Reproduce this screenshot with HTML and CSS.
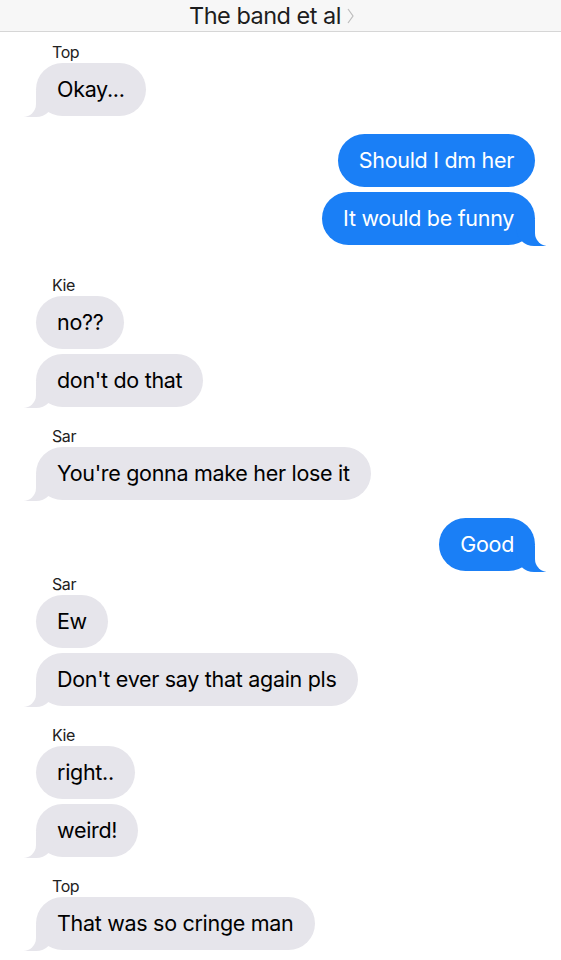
FILE: index.html
```html
<!DOCTYPE html>
<html lang="en">
<head>
  <meta charset="UTF-8">
  <title>The band et al</title>
  <link rel="stylesheet" href="styles.css">
</head>
<body>

<!-- conversation header -->
<header class="topbar">
  <span class="title">The band et al</span>
  <svg class="chevron" width="7" height="16" viewBox="0 0 7 16">
    <polyline points="1,1 6,8 1,15" fill="none" stroke="#bdbdbd" stroke-width="1.2"/>
  </svg>
</header>

<main class="thread">

  <div class="group them first">
    <div class="sender">Top</div>
    <div class="bubble tail">Okay...</div>
  </div>

  <div class="group me">
    <div class="bubble">Should I dm her</div>
    <div class="bubble tail">It would be funny</div>
  </div>

  <div class="group them gap-lg">
    <div class="sender">Kie</div>
    <div class="bubble">no??</div>
    <div class="bubble tail">don't do that</div>
  </div>

  <div class="group them">
    <div class="sender">Sar</div>
    <div class="bubble tail">You're gonna make her lose it</div>
  </div>

  <div class="group me">
    <div class="bubble tail">Good</div>
  </div>

  <div class="group them gap-sm">
    <div class="sender">Sar</div>
    <div class="bubble">Ew</div>
    <div class="bubble tail">Don't ever say that again pls</div>
  </div>

  <div class="group them">
    <div class="sender">Kie</div>
    <div class="bubble">right..</div>
    <div class="bubble tail">weird!</div>
  </div>

  <div class="group them">
    <div class="sender">Top</div>
    <div class="bubble tail">That was so cringe man</div>
  </div>

</main>

</body>
</html>
```

FILE: styles.css
```css
:root {
  --gray: #e6e5eb;
  --blue: #1a7ff6;
  --bg: #fff;
}
* {
  box-sizing: border-box;
  margin: 0;
  padding: 0;
}
body {
  font-family: 'Inter', 'Liberation Sans', sans-serif;
  background: var(--bg);
  color: #000;
}

/* header bar */
.topbar {
  height: 32px;
  background: #f7f7f7;
  border-bottom: 1px solid #d6d6d6;
  display: flex;
  align-items: center;
  justify-content: center;
  gap: 6px;
  padding-right: 18px;
}
.title {
  font-size: 23.5px;
  letter-spacing: -0.5px;
  color: #1d1d1d;
  line-height: 30px;
}
.chevron {
  margin-top: 1px;
}

/* messages */
.thread {
  display: flex;
  flex-direction: column;
  padding-bottom: 10px;
}
.group {
  display: flex;
  flex-direction: column;
  gap: 5px;
  margin-top: 19px;
}
.group.first { margin-top: 10px; }
.group.gap-lg { margin-top: 30px; }
.group.gap-sm { margin-top: 3px; }
.group.me {
  align-items: flex-end;
  margin-top: 18px;
  padding-right: 26px;
}
.group.them {
  align-items: flex-start;
  padding-left: 36px;
}
.sender {
  font-size: 16px;
  line-height: 20px;
  height: 16px;
  color: #222;
  padding-left: 16px;
  letter-spacing: -0.4px;
}
.bubble {
  position: relative;
  height: 53px;
  line-height: 53px;
  padding: 0 21px;
  border-radius: 27px;
  font-size: 21.5px;
  letter-spacing: -0.3px;
  white-space: nowrap;
}
.them .bubble {
  background: var(--gray);
  color: #000;
}
.me .bubble {
  background: var(--blue);
  color: #fff;
}

/* tails */
.bubble.tail::before,
.bubble.tail::after {
  content: "";
  position: absolute;
  bottom: -1px;
  height: 26px;
}
.them .bubble.tail::before {
  left: -12px;
  width: 30px;
  background: var(--gray);
  border-bottom-right-radius: 18px;
}
.them .bubble.tail::after {
  left: -32px;
  width: 32px;
  background: var(--bg);
  border-bottom-right-radius: 13px;
}
.me .bubble.tail::before {
  right: -11px;
  width: 30px;
  background: var(--blue);
  border-bottom-left-radius: 18px;
}
.me .bubble.tail::after {
  right: -32px;
  width: 32px;
  background: var(--bg);
  border-bottom-left-radius: 13px;
}
```
